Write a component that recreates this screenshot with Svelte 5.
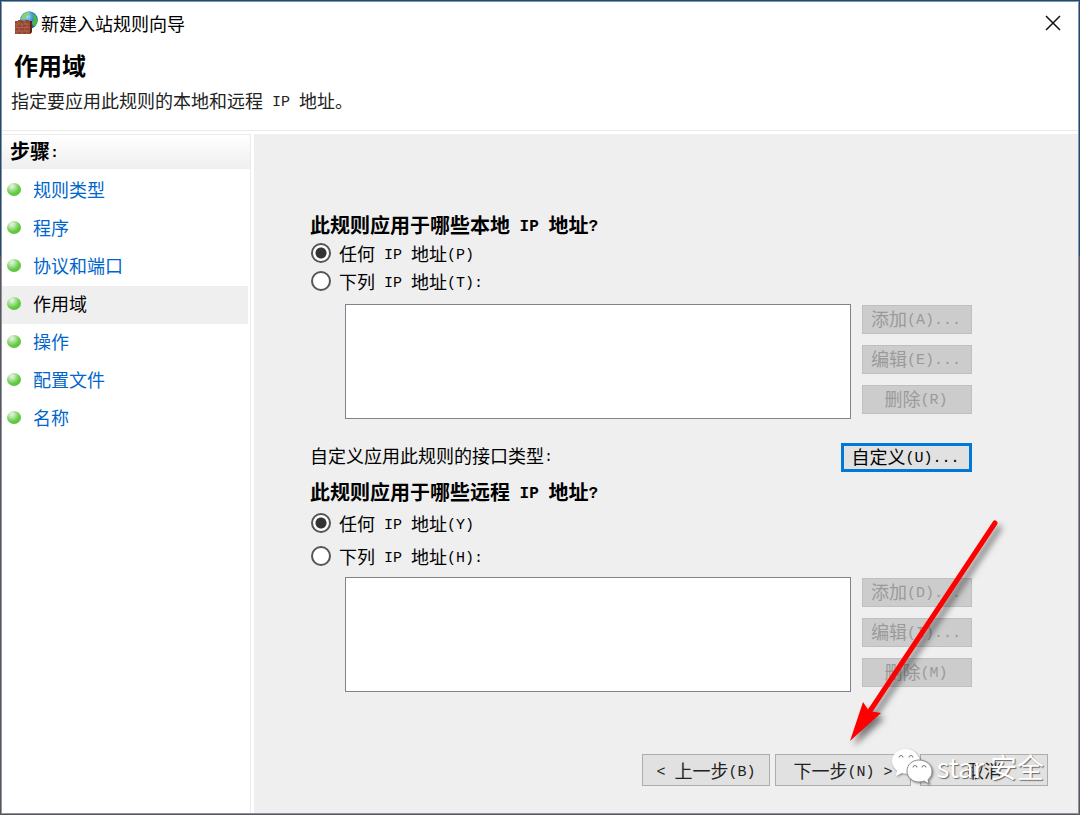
<script>
  const steps = [
    "规则类型",
    "程序",
    "协议和端口",
    "作用域",
    "操作",
    "配置文件",
    "名称",
  ];
  let current = $state(3);

  const scopes = [
    {
      id: "local",
      title: "此规则应用于哪些本地 IP 地址?",
      any: "任何 IP 地址(P)",
      list: "下列 IP 地址(T):",
      buttons: ["添加(A)...", "编辑(E)...", "删除(R)"],
    },
    {
      id: "remote",
      title: "此规则应用于哪些远程 IP 地址?",
      any: "任何 IP 地址(Y)",
      list: "下列 IP 地址(H):",
      buttons: ["添加(D)...", "编辑(I)...", "删除(M)"],
    },
  ];
  let choice = $state({ local: "any", remote: "any" });

  // Half-width runs are set in the mono face, everything else in the CJK face
  function runs(text) {
    return text.match(/[\x20-\x7e]+|[^\x20-\x7e]+/g) ?? [];
  }
</script>

{#snippet mixed(text)}
  <span class="mixed"
    >{#each runs(text) as run}<span class:half={run.charCodeAt(0) < 127}
        >{run}</span
      >{/each}</span
  >
{/snippet}

{#snippet scope(s)}
  <fieldset class="scope {s.id}">
    <legend>{@render mixed(s.title)}</legend>
    <label class="option">
      <input type="radio" name={s.id} value="any" bind:group={choice[s.id]} />
      {@render mixed(s.any)}
    </label>
    <label class="option">
      <input type="radio" name={s.id} value="list" bind:group={choice[s.id]} />
      {@render mixed(s.list)}
    </label>
    <div class="addresses">
      <select multiple aria-label={s.title}></select>
      <div class="side">
        {#each s.buttons as b}
          <button disabled={choice[s.id] === "any"}>{@render mixed(b)}</button>
        {/each}
      </div>
    </div>
  </fieldset>
{/snippet}

<div class="desktop">
  <div class="dialog">
    <header>
      <div class="titlebar">
        <svg class="app-icon" width="24" height="24" viewBox="0 0 24 24">
          <defs>
            <radialGradient id="globe" cx="0.4" cy="0.3" r="0.75">
              <stop offset="0" stop-color="#a8e0fa" />
              <stop offset="0.5" stop-color="#2f86d8" />
              <stop offset="1" stop-color="#1a4fa8" />
            </radialGradient>
          </defs>
          <circle cx="15" cy="9" r="8.8" fill="url(#globe)" />
          <path d="M8 5Q11 1 15 1L16 3L13 5L11 8L7 9Z" fill="#8bd06a" />
          <path d="M18 3L21 4Q24 8 23 12L20 16L18 12L20 8Z" fill="#4fb83c" />
          <path d="M1 10h3V9h4v1h3V9h4v1h3v11l-2 2H1z" fill="#96452f" />
          <path
            d="M1 13h15M1 16.500h15M1 20h15M5 10v3M11 10v3M3 13v3.500M8 13v3.500M13 13v3.500M5 16.500v3.500M11 16.500v3.500M3 20v3M8 20v3M13 20v3"
            stroke="#bd7f6a"
            stroke-width="0.5"
            fill="none"
          />
          <path d="M16 10h2v11l-2 2z" fill="#5e241b" />
        </svg>
        <span class="caption">新建入站规则向导</span>
        <button class="close" aria-label="关闭">
          <svg width="16" height="16" viewBox="0 0 16 16">
            <path d="M1 1L15 15M15 1L1 15" stroke="#111" stroke-width="1.500" />
          </svg>
        </button>
      </div>
      <h1>作用域</h1>
      <p>{@render mixed("指定要应用此规则的本地和远程 IP 地址。")}</p>
    </header>

    <div class="body">
      <nav>
        <h2>{@render mixed("步骤:")}</h2>
        <ul>
          {#each steps as step, i}
            <li class:current={i === current}>
              <span class="ball"></span>
              <a
                href="#step-{i}"
                aria-current={i === current ? "step" : undefined}
                onclick={() => (current = i)}>{step}</a
              >
            </li>
          {/each}
        </ul>
      </nav>

      <main>
        {@render scope(scopes[0])}
        <div class="interfaces">
          <span>{@render mixed("自定义应用此规则的接口类型:")}</span>
          <button class="default">{@render mixed("自定义(U)...")}</button>
        </div>
        {@render scope(scopes[1])}
        <footer>
          <button class="back">{@render mixed("< 上一步(B)")}</button>
          <button class="next">{@render mixed("下一步(N) >")}</button>
          <button class="cancel">取消</button>
        </footer>
      </main>
    </div>

    <svg class="arrow" width="180" height="240" viewBox="840 515 180 240">
      <path d="M995 523L868 714" stroke="#f00" stroke-width="5" stroke-linecap="round" />
      <path d="M850 741L863 702L869 711L881 713Z" fill="#f00" />
    </svg>

    <div class="watermark">
      <svg width="42" height="38" viewBox="0 0 42 38">
        <path
          d="M15 1C7 1 1 6.500 1 13c0 4 2 7 5 9.500L5 28l6-3q3 1 6 .500C29 25 29 18 29 13 28 6 22 1 15 1z"
          fill="#fff"
        />
        <path
          d="M28 12c-7 0-12 5-12 11s5 11 12 11q3 0 5-1l5 3-1-4.500c3-2 4-5 4-8.500 0-6-6-11-13-11z"
          fill="#fff"
          stroke="#8c8c8c"
          stroke-width="1"
        />
        <g fill="#fff" stroke="#777" stroke-width="1">
          <path d="M8 9.500a2 2 0 1 1 4 0M18 9.500a2 2 0 1 1 4 0" />
          <path d="M22 19.500a2 2 0 1 1 4 0M31 19.500a2 2 0 1 1 4 0" />
        </g>
      </svg>
      <span>star 安全</span>
    </div>
  </div>
</div>

<style>
  :global(body) {
    margin: 0;
  }
  .desktop {
    box-sizing: border-box;
    min-height: 100vh;
    display: flex;
    padding: 1px;
    background: linear-gradient(#1c4a72 256px, #5c555c 256px);
    font-family: "Noto Sans CJK SC", sans-serif;
    font-size: 18px;
    line-height: 28px;
    color: #000;
  }
  .dialog {
    position: relative;
    flex: 1;
    display: flex;
    flex-direction: column;
    border: 1px solid #8d94a0;
    border-top-color: #7f9ab0;
    background: #fff;
  }
  .half {
    font-family: "Liberation Mono", monospace;
    font-size: 15px;
    line-height: 1;
    vertical-align: 2px;
    white-space: pre;
  }
  .mixed {
    white-space: nowrap;
  }

  header {
    height: 128px;
    border-bottom: 1px solid #ebebeb;
  }
  .titlebar {
    display: flex;
    align-items: center;
    height: 42px;
    padding: 0 17px 0 12px;
  }
  .caption {
    flex: 1;
    margin-left: 3px;
  }
  .close {
    display: flex;
    padding: 0;
    border: none;
    background: none;
  }
  h1 {
    margin: 4px 12px 0;
    font-size: 24px;
    line-height: 34px;
  }
  p {
    margin: 4px 9px 0;
    color: #222;
  }

  .body {
    flex: 1;
    display: flex;
    gap: 3px;
    padding-top: 3px;
  }
  nav {
    box-sizing: border-box;
    width: 249px;
    flex: none;
    border-right: 1px solid #ececec;
  }
  h2 {
    margin: 0;
    padding: 0 8px;
    height: 34px;
    line-height: 32px;
    font-size: 20px;
    border-top: 1px solid #ececec;
    background: linear-gradient(#fff, #efefef);
  }
  ul {
    list-style: none;
    margin: 3px 2px 0 0;
    padding: 0;
  }
  li {
    display: flex;
    align-items: center;
    gap: 12px;
    box-sizing: border-box;
    height: 38px;
    padding: 0 0 4px 5px;
  }
  li.current {
    background: #efefef;
  }
  a {
    color: #0066cc;
    text-decoration: none;
  }
  .current a {
    color: #000;
  }
  .ball {
    width: 14px;
    height: 13px;
    border-radius: 50%;
    background: radial-gradient(circle at 35% 25%, #d8efd2 10%, #66cc44 55%, #43b82c);
  }

  main {
    flex: 1;
    display: flex;
    flex-direction: column;
    padding: 77px 30px 27px 56px;
    background: #efefef;
  }
  .scope,
  .interfaces {
    margin: 0 76px 0 0;
  }
  .scope {
    padding: 0;
    border: none;
    min-width: 0;
  }
  legend {
    padding: 0;
    font-size: 20px;
    font-weight: bold;
  }
  legend :global(.half) {
    font-size: 16px;
  }
  .option {
    display: flex;
    align-items: center;
    gap: 8px;
    height: 28px;
  }
  .remote .option {
    height: 33px;
  }
  input {
    appearance: none;
    box-sizing: border-box;
    width: 20px;
    height: 20px;
    margin: 0 0 0 1px;
    border: 2px solid #555;
    border-radius: 50%;
    background: #fff;
  }
  input:checked {
    background: radial-gradient(circle, #333 5px, #fff 6px);
  }
  .addresses {
    display: flex;
    align-items: flex-start;
    gap: 11px;
    margin: 9px 0 0 35px;
  }
  .remote .addresses {
    margin-top: 5px;
  }
  select {
    flex: 1;
    min-width: 0;
    box-sizing: border-box;
    height: 115px;
    border: 1px solid #7e848e;
    border-radius: 0;
    background: #fff;
    outline: none;
  }
  .side {
    display: flex;
    flex-direction: column;
    gap: 11px;
    padding-top: 1px;
    width: 110px;
  }
  button {
    font: inherit;
    color: #000;
  }
  .side button,
  .interfaces button,
  footer button {
    display: flex;
    align-items: center;
    justify-content: center;
    box-sizing: border-box;
    height: 29px;
    padding: 0 2px 3px 0;
    border: 1px solid #adadad;
    background: #e1e1e1;
    line-height: 24px;
  }
  .side button:disabled {
    border-color: #bfbfbf;
    background: #cccccc;
    color: #9a9a9a;
  }
  .interfaces {
    display: flex;
    justify-content: space-between;
    margin-top: 24px;
    margin-bottom: 6px;
    line-height: 24px;
  }
  .interfaces .default {
    width: 131px;
    border: 3px solid #0078d7;
  }
  footer {
    display: flex;
    justify-content: flex-end;
    margin-top: auto;
  }
  footer button {
    width: 128px;
    height: 32px;
    padding: 0;
    color: #222;
  }
  footer .next {
    width: 136px;
    margin: 0 9px 0 5px;
  }

  .arrow {
    position: absolute;
    right: 58px;
    bottom: 58px;
    fill: none;
    filter: drop-shadow(4px 5px 3px rgba(0, 0, 0, 0.5));
    pointer-events: none;
  }
  .watermark {
    position: absolute;
    right: 34px;
    bottom: 27px;
    display: flex;
    align-items: center;
    gap: 4px;
    color: #fff;
    font-size: 27px;
    line-height: 38px;
    text-shadow: 1px 1px 1px #666;
    pointer-events: none;
  }
  .watermark svg {
    filter: drop-shadow(1px 1px 1px rgba(0, 0, 0, 0.4));
  }
</style>
